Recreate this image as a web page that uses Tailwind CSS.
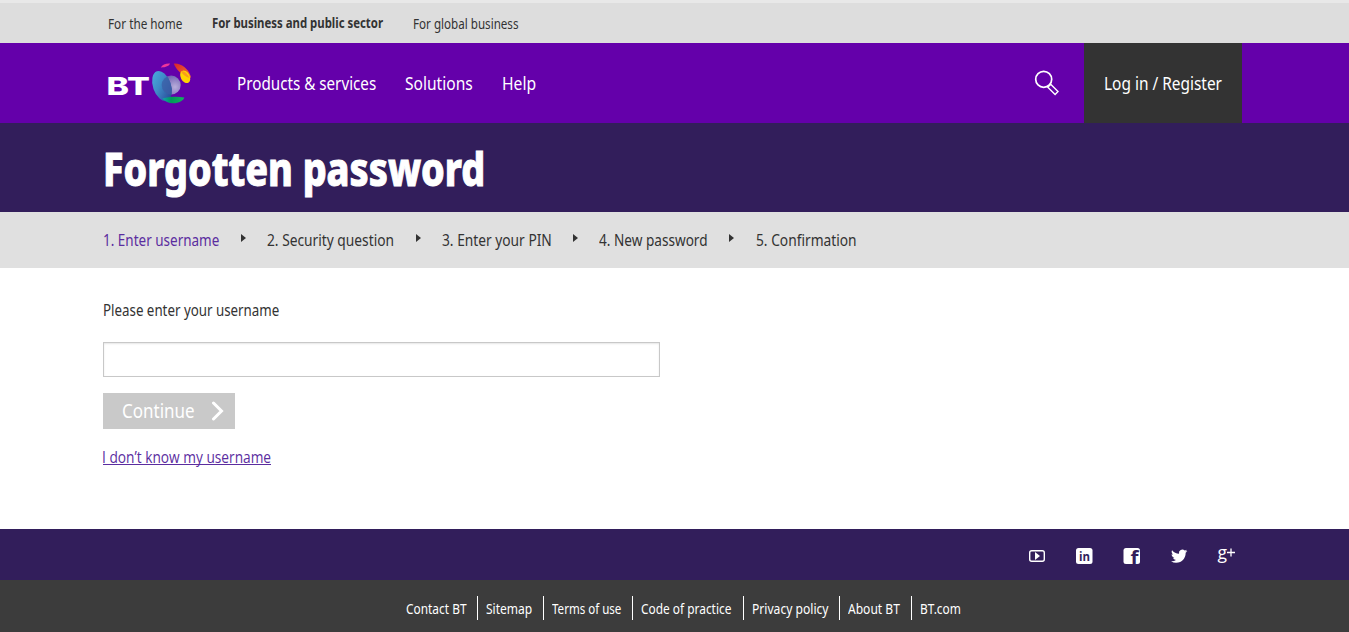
<!DOCTYPE html>
<html lang="en">
<head>
<meta charset="utf-8">
<title>Forgotten password</title>
<script src="https://cdn.jsdelivr.net/npm/@tailwindcss/browser@4"></script>
</head>
<body class="bg-white font-['Noto_Sans','Open_Sans',sans-serif] text-[#333] whitespace-nowrap">

<div class="h-[3px] bg-[#e8e8e8]"></div>
<div class="flex h-10 items-center bg-[#ddd] pl-[107.500px] pt-px text-[14px] leading-5">
  <a class="block w-[104.500px]"><span class="inline-block origin-left scale-x-[.84]">For the home</span></a>
  <a class="-mt-0.5 block w-[201px] font-bold"><span class="inline-block origin-left scale-x-[.813]">For business and public sector</span></a>
  <a class="block w-[108px]"><span class="inline-block origin-left scale-x-[.83]">For global business</span></a>
</div>

<header class="flex h-20 items-center bg-[#6400aa] text-[18px] leading-6 text-white">
  <svg class="ml-[100px] h-[55px] w-[100px]" viewBox="100 55.500 100 55">
    <defs>
      <linearGradient id="blue" x1="0" y1="0" x2=".6" y2="1"><stop offset="0" stop-color="#4cb0e0"/><stop offset=".5" stop-color="#3f8cc8"/><stop offset="1" stop-color="#2b4f9c"/></linearGradient>
      <radialGradient id="violet" cx=".7" cy=".6" r=".7"><stop offset="0" stop-color="#b9aedb"/><stop offset="1" stop-color="#6a5bb0"/></radialGradient>
      <linearGradient id="red" x1="0" y1="0" x2="1" y2="1"><stop offset="0" stop-color="#d8222c"/><stop offset="1" stop-color="#f47a30"/></linearGradient>
      <linearGradient id="green" x1="0" x2="1"><stop offset="0" stop-color="#12a0b4"/><stop offset=".4" stop-color="#009a5a"/><stop offset="1" stop-color="#14b060"/></linearGradient>
      <clipPath id="globe"><ellipse cx="162" cy="85.5" rx="9" ry="15.5" transform="rotate(-19 162 85.5)"/></clipPath>
    </defs>
    <text x="106.400" y="94" font-family="Inter, sans-serif" font-weight="800" font-size="25" textLength="43.500" lengthAdjust="spacingAndGlyphs" fill="#fff">BT</text>
    <circle cx="171.2" cy="84.6" r="9.5" fill="url(#violet)"/>
    <ellipse cx="162" cy="85.5" rx="9" ry="15.5" transform="rotate(-19 162 85.5)" fill="url(#blue)"/>
    <circle cx="171.2" cy="84.6" r="9.5" fill="#3c5da6" opacity=".75" clip-path="url(#globe)"/>
    <path d="M160.800 67c1.500-2.600 5-4.200 9.200-3.900-.7 2.500-4.600 4-9.200 3.900z" fill="#f0359a"/>
    <path d="M173.800 63.200c6.500-.8 14.500 4.800 16.900 12.600.3 2-1.200 2.800-3.200 1.300-5.500-2.500-11.400-8.300-13.700-13.900z" fill="url(#red)"/>
    <ellipse cx="185.200" cy="76.300" rx="4.500" ry="6.700" transform="rotate(-28 185.200 76.300)" fill="#ffd500"/>
    <path d="M180.800 70.500c3-.6 6.800 2.200 8.700 7-3.500-.8-7-3.500-8.700-7z" fill="#f99d1c"/>
    <path d="M162.300 97.900c6-1.700 15.500-2.200 22-.9-.5 3-6 6-11.500 5.800-4-.2-8-2.100-10.500-4.900z" fill="url(#green)"/>
  </svg>
  <nav class="ml-[37px] flex">
    <a class="block w-[168px]"><span class="inline-block origin-left scale-x-[.845]">Products &amp; services</span></a>
    <a class="block w-[97px]"><span class="inline-block origin-left scale-x-[.865]">Solutions</span></a>
    <a class="block w-[35px]"><span class="inline-block origin-left scale-x-[.87]">Help</span></a>
  </nav>
  <svg class="ml-auto mr-[23px] h-7 w-7" viewBox="1033 69 28 28" fill="none" stroke="#fff">
    <circle cx="1043.700" cy="79.300" r="8" stroke-width="1.700"/>
    <path d="M1047.800 87.200l2.900-3 7.300 7.300-2.900 3z" stroke-width="1.400"/>
  </svg>
  <a class="mr-[107px] block h-20 w-[158px] bg-[#333] pl-5 pt-7"><span class="inline-block origin-left scale-x-[.857]">Log in / Register</span></a>
</header>

<div class="flex h-[89px] items-center bg-[#321e5b] pl-[102.500px]">
  <h1 class="w-[386px] text-[46px] font-extrabold leading-[60px] text-white [-webkit-text-stroke:1px_white]"><span class="inline-block origin-left scale-x-[.818]">Forgotten password</span></h1>
</div>

<ol class="flex h-14 items-center bg-[#e0e0e0] pl-[102.500px] text-[16px] leading-6">
  <li class="flex w-[164px] text-[#5b2d9f]"><span class="w-[138px]"><span class="inline-block origin-left scale-x-[.843]">1. Enter username</span></span><svg class="mt-1.5 h-2 w-[5px]" viewBox="0 0 5 8"><path d="M0 0l5 4-5 4z" fill="#333"/></svg></li>
  <li class="flex w-[175px]"><span class="w-[149px]"><span class="inline-block origin-left scale-x-[.86]">2. Security question</span></span><svg class="mt-1.5 h-2 w-[5px]" viewBox="0 0 5 8"><path d="M0 0l5 4-5 4z" fill="#333"/></svg></li>
  <li class="flex w-[157.500px]"><span class="w-[131px]"><span class="inline-block origin-left scale-x-[.86]">3. Enter your PIN</span></span><svg class="mt-1.5 h-2 w-[5px]" viewBox="0 0 5 8"><path d="M0 0l5 4-5 4z" fill="#333"/></svg></li>
  <li class="flex w-[156.500px]"><span class="w-[130px]"><span class="inline-block origin-left scale-x-[.85]">4. New password</span></span><svg class="mt-1.5 h-2 w-[5px]" viewBox="0 0 5 8"><path d="M0 0l5 4-5 4z" fill="#333"/></svg></li>
  <li class="w-[102px]"><span class="inline-block origin-left scale-x-[.86]">5. Confirmation</span></li>
</ol>

<main class="h-[261px] pl-[103px] pt-[30px] text-[16px] leading-6">
  <label for="u" class="block h-11 w-[178px]"><span class="-ml-[.5px] inline-block origin-left scale-x-[.833]">Please enter your username</span></label>
  <input id="u" class="block h-[35px] w-[557px] border border-[#c8c8c8] bg-white shadow-[inset_0_1px_2px_rgba(0,0,0,0.1)]">
  <button class="mt-4 flex h-9 w-[132px] items-center bg-[#c9c9c9] pl-[19px] text-[20px] text-white">
    <span class="block w-[88px] text-left"><span class="inline-block origin-left scale-x-[.85]">Continue</span></span>
    <svg class="h-5 w-[15px]" viewBox="0 0 15 20" fill="none" stroke="#fff" stroke-width="3" stroke-linecap="round"><path d="M3.500 2l8 8-8 8"/></svg>
  </button>
  <a class="mt-4 block h-5 w-[168px] border-b border-[#5b2d9f] font-['Open_Sans',sans-serif] text-[#5b2d9f]"><span class="-ml-px inline-block origin-left scale-x-[.857]">I don’t know my username</span></a>
</main>

<div class="flex h-[51px] items-center justify-end bg-[#321e5b] pr-[111px] pt-[3px]">
  <svg class="h-6 w-[210px]" viewBox="1028 544 210 24">
    <rect x="1029.700" y="550.700" width="14.600" height="10.600" rx="2" fill="none" stroke="#fff" stroke-width="1.400"/>
    <path d="M1035 552l5 4-5 4z" fill="#fff"/>
    <rect x="1076" y="548" width="16.500" height="16" rx="2.500" fill="#fff"/>
    <text x="1079" y="561" font-family="Open Sans, sans-serif" font-weight="700" font-size="13" textLength="11" lengthAdjust="spacingAndGlyphs" fill="#321e5b">in</text>
    <rect x="1123.500" y="548" width="16.500" height="16" rx="2.500" fill="#fff"/>
    <text x="1130.500" y="564" font-family="Open Sans, sans-serif" font-weight="700" font-size="18" textLength="8" lengthAdjust="spacingAndGlyphs" fill="#321e5b">f</text>
    <path transform="translate(1171 548) scale(.68)" fill="#fff" d="M23.950 4.570a10 10 0 01-2.820.77 4.960 4.960 0 002.160-2.720c-.95.55-2 .96-3.130 1.180a4.920 4.920 0 00-8.380 4.480C7.690 8.090 4.070 6.130 1.640 3.160a4.820 4.820 0 00-.67 2.480c0 1.700.87 3.210 2.190 4.100a4.900 4.900 0 01-2.230-.62v.06a4.920 4.920 0 003.950 4.830 5 5 0 01-2.210.08 4.940 4.940 0 004.600 3.420A9.870 9.870 0 010 19.540a14 14 0 007.550 2.210c9.050 0 14-7.500 14-13.980 0-.21 0-.42-.02-.63a9.940 9.940 0 002.460-2.550z"/>
    <text x="1217.500" y="558.500" font-family="Open Sans, sans-serif" font-size="17.500" textLength="9.500" lengthAdjust="spacingAndGlyphs" fill="#fff">g</text>
    <path d="M1231 548.500v8M1227 552.500h8" stroke="#fff" stroke-width="1.300"/>
  </svg>
</div>

<footer class="flex h-[52px] items-center bg-[#3c3c3c] pl-[405.500px] pt-1 text-[14px] leading-[26px] text-white">
  <a class="mr-2 block h-6 w-[72.500px] border-r border-white"><span class="inline-block origin-left scale-x-[.85]">Contact BT</span></a>
  <a class="mr-2 block h-6 w-[58px] border-r border-white"><span class="inline-block origin-left scale-x-[.86]">Sitemap</span></a>
  <a class="mr-2 block h-6 w-[81px] border-r border-white"><span class="inline-block origin-left scale-x-[.825]">Terms of use</span></a>
  <a class="mr-2 block h-6 w-[103px] border-r border-white"><span class="inline-block origin-left scale-x-[.85]">Code of practice</span></a>
  <a class="mr-2 block h-6 w-[88px] border-r border-white"><span class="inline-block origin-left scale-x-[.865]">Privacy policy</span></a>
  <a class="mr-2 block h-6 w-[64px] border-r border-white"><span class="inline-block origin-left scale-x-[.86]">About BT</span></a>
  <a class="block h-6 w-[43px]"><span class="inline-block origin-left scale-x-[.85]">BT.com</span></a>
</footer>
</body>
</html>
